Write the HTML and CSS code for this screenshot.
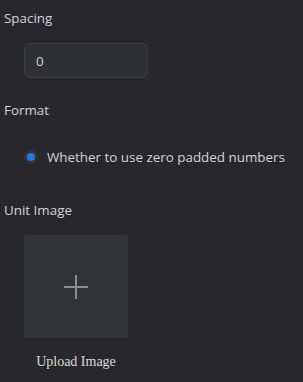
FILE: index.html
```html
<!DOCTYPE html>
<html lang="en">
<head>
  <meta charset="UTF-8">
  <title>Settings</title>
  <link rel="stylesheet" href="styles.css">
</head>
<body>
  <div class="panel">
    <div class="field">
      <div class="field-label">Spacing</div>
      <div class="field-body">
        <input class="num-input" type="text" value="0">
      </div>
    </div>

    <div class="field">
      <div class="field-label">Format</div>
      <div class="field-body">
        <label class="radio">
          <span class="radio-dot"></span>
          <span class="radio-text">Whether to use zero padded numbers</span>
        </label>
      </div>
    </div>

    <div class="field">
      <div class="field-label">Unit Image</div>
      <div class="field-body">
        <div class="upload">
          <svg width="26" height="26" viewBox="0 0 26 26">
            <path d="M13 1v24M1 13h24" stroke="#8d8d8f" stroke-width="2" fill="none"/>
          </svg>
        </div>
        <div class="upload-text">Upload Image</div>
      </div>
    </div>
  </div>
</body>
</html>
```

FILE: styles.css
```css
html, body {
  margin: 0;
  background: #28282c;
}

body {
  font-family: "Open Sans", "Noto Sans", sans-serif;
  font-size: 13.4px;
  color: #d4d4d6;
}

.panel {
  padding: 9px 4px 0;
}

.field-label {
  line-height: 18px;
}

.field-body {
  padding: 16px 0 23px 20px;
}

.field:last-child .field-body {
  padding-bottom: 0;
}

.num-input {
  display: block;
  width: 124px;
  height: 35px;
  box-sizing: border-box;
  background: #2f3033;
  border: 1px solid #3c3d40;
  border-radius: 6px;
  color: #d4d4d6;
  font-family: inherit;
  font-size: 13.4px;
  padding: 0 11px;
  outline: none;
}

.radio {
  display: flex;
  align-items: center;
  gap: 9px;
  height: 44px;
  margin-bottom: -1px;
  white-space: nowrap;
}

.radio-dot {
  width: 14px;
  height: 14px;
  border-radius: 50%;
  background: #323337;
  display: flex;
  align-items: center;
  justify-content: center;
}

.radio-dot::after {
  content: "";
  width: 8px;
  height: 8px;
  border-radius: 50%;
  background: #1f7ae0;
}

.upload {
  width: 104px;
  height: 103px;
  background: #333437;
  border-radius: 2px;
  display: flex;
  align-items: center;
  justify-content: center;
}

.upload-text {
  width: 104px;
  text-align: center;
  margin-top: 16px;
  font-family: "Liberation Serif", serif;
  font-size: 14px;
  color: #dcdcdc;
}
```
